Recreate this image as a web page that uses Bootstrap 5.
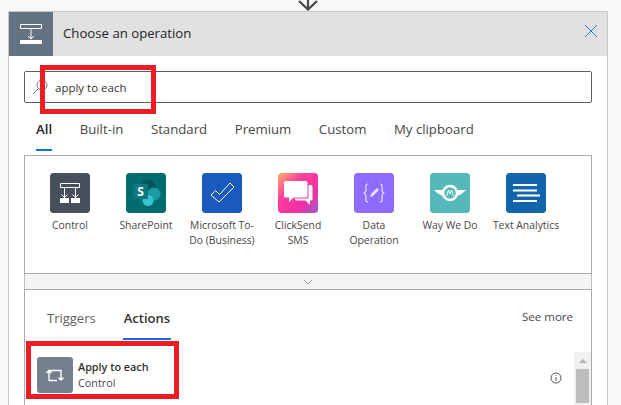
<!DOCTYPE html>
<html lang="en"><head><meta charset="utf-8"><title>Choose an operation</title>
<link rel="stylesheet" href="https://cdn.jsdelivr.net/npm/bootstrap@5.3.0/dist/css/bootstrap.min.css">
<style>
html,body{height:405px;overflow:hidden}
body{background:#f8f8f8;font-family:"Open Sans","Noto Sans",sans-serif;color:#323130;font-size:12px}
.page-wrap{padding:0 13px 0 8px;position:relative}
.flow-arrow{height:11px;line-height:0}
.op-card{background:#fff;border:1px solid #c8c8c8;border-bottom:0;height:394px;overflow:hidden}
.op-head{height:44px;background:#e1e1e1}
.op-badge{width:44px;height:44px;background:#647382}
.op-title{font-size:13.2px;margin-left:10px;color:#252423}
.op-close{margin-right:9px;margin-top:-6px}
.op-body{padding:15px 15px 0 15px}
.op-search{height:32px;border:1px solid #605e5c;border-radius:2px;padding-left:7px;gap:7px}
.op-search span{font-size:11.5px;color:#323130;padding-top:1px}
.tab-row{height:52px;gap:27.6px;padding-left:12px}
.tab-row a{height:48px;font-size:13.2px;color:#484644;text-decoration:none;display:flex;align-items:center;padding-top:8px;border-bottom:2px solid transparent}
.tab-row a.on{color:#252423;font-weight:600;border-bottom-color:#0f6cf0}
.conn-panel{height:118px;border:1px solid #a9a9a9;border-bottom:0;padding:17px 0 0 7px}
.conn-item{width:76px;padding:0 4px;text-align:center;font-size:10.4px;line-height:15px;color:#484644}
.conn-icon{width:40px;height:40px;border-radius:3px;margin:0 auto 5px;display:block}
.fold-bar{height:17px;background:#f3f3f3;border:1px solid #a9a9a9;border-left-color:#bbb;border-right-color:#bbb}
.res-panel{border:1px solid #a9a9a9;border-top:0;height:200px;position:relative}
.res-tabs{height:50px;padding-left:22px;gap:27px}
.res-tabs a{height:50px;font-size:13px;text-decoration:none;color:#605e5c;display:flex;align-items:center;padding-top:10px;border-bottom:2px solid transparent}
.res-tabs a.on{color:#323130;font-weight:600;border-bottom-color:#0f6cf0;padding:10px 1px 0}
.res-tabs a.see-link{margin-left:auto;margin-right:18px;font-size:11.5px;color:#484644;padding-top:6px}
.res-row{padding:17px 0 0 12px;gap:5px}
.res-icon{width:36px;height:36px;border-radius:3px;background:#75808f}
.res-name{font-size:10.8px;font-weight:600;line-height:16px;color:#323130;margin-top:2px}
.res-sub{font-size:10.8px;line-height:16px;color:#484644}
.res-info{margin-left:auto;margin-right:29px;margin-top:15px}
.scroll-rail{position:absolute;right:0;top:62px;width:17px;height:60px;background:#f1f1f1}
.scroll-up{width:0;height:0;border:4px solid transparent;border-top:0;border-bottom:4px solid #b0b0b0;margin:0 auto;position:relative;top:7px}
.scroll-thumb{width:13px;height:34px;background:#bdbdbd;margin:13px auto 0}
.red-mark{position:absolute;border:5px solid #ed1c24;pointer-events:none}
.mark-a{left:40px;top:65px;width:116px;height:49px}
.mark-b{left:26px;top:341px;width:153px;height:58px}
</style></head><body>
<div class="page-wrap">
<div class="flow-arrow d-flex justify-content-center">
<svg width="24" height="11" viewBox="0 0 24 11"><path d="M12 -6V9M3 1l9 8.500 9-8.500" fill="none" stroke="#484644" stroke-width="2.200"/></svg>
</div>
<div class="op-card">
 <div class="op-head d-flex align-items-center">
  <div class="op-badge d-flex align-items-center justify-content-center">
   <svg width="24" height="22" viewBox="0 0 24 22"><path d="M1.500 1.500h21v4h-21z" fill="none" stroke="#fff"/><path d="M12 6v10M9 13l3 3 3-3" fill="none" stroke="#fff"/><path d="M1 17h22v4H1z" fill="#fff"/></svg>
  </div>
  <div class="op-title flex-grow-1">Choose an operation</div>
  <svg class="op-close" width="14" height="14" viewBox="0 0 14 14"><path d="M1 1l12 12M13 1L1 13" stroke="#3f6fe8" fill="none"/></svg>
 </div>
 <div class="op-body">
  <div class="op-search d-flex align-items-center">
   <svg width="16" height="16" viewBox="0 0 16 16"><circle cx="10" cy="6" r="5" fill="none" stroke="#777"/><path d="M6.500 9.500L1 15" stroke="#777" fill="none"/></svg>
   <span>apply to each</span>
  </div>
  <nav class="tab-row d-flex">
   <a class="on" href="#">All</a><a href="#">Built-in</a><a href="#">Standard</a><a href="#">Premium</a><a href="#">Custom</a><a href="#">My clipboard</a>
  </nav>
  <div class="conn-panel d-flex">
   <div class="conn-item">
    <svg class="conn-icon" viewBox="0 0 40 40"><rect width="40" height="40" rx="3" fill="#484f5c"/><path d="M10.500 10.500h19v4h-19zM14.500 15v10M11.500 21.500l3 3 3-3M25.500 15v10M22.500 21.500l3 3 3-3" fill="none" stroke="#fff"/><path d="M10 25h9v5h-9zM21 25h9v5h-9z" fill="#fff"/></svg>
    Control</div>
   <div class="conn-item">
    <svg class="conn-icon" viewBox="0 0 40 40"><rect width="40" height="40" rx="3" fill="#036c70"/><circle cx="21.500" cy="15" r="8.500" fill="#04585c"/><circle cx="28" cy="21" r="6.500" fill="#1a9ba1"/><circle cx="22" cy="27.500" r="5.500" fill="#37c6d0"/><rect x="7" y="11" width="15" height="15" rx="1" fill="#0b7a80"/><text x="14.500" y="23" font-size="12" font-weight="700" text-anchor="middle" fill="#fff" font-family="Open Sans">S</text></svg>
    SharePoint</div>
   <div class="conn-item">
    <svg class="conn-icon" viewBox="0 0 40 40"><rect width="40" height="40" rx="3" fill="#185abd"/><path d="M9 22l4.500-4.500 4 4L28 10l4 4-15 15z" fill="none" stroke="#fff" stroke-width="1"/></svg>
    Microsoft To-Do (Business)</div>
   <div class="conn-item">
    <svg class="conn-icon" viewBox="0 0 40 40"><defs><linearGradient id="cs" x1="0" y1="0" x2="1" y2="1"><stop offset="0" stop-color="#ffb06a"/><stop offset=".35" stop-color="#ff3d9a"/><stop offset=".7" stop-color="#f22fa6"/><stop offset="1" stop-color="#9a5fd0"/></linearGradient></defs><rect width="40" height="40" rx="3" fill="url(#cs)"/><path d="M30.500 12H33a1.500 1.500 0 0 1 1.500 1.500V26a1.500 1.500 0 0 1-1.500 1.500h-1V32l-4.500-4.500H18l-2-2h13a1.500 1.500 0 0 0 1.500-1.500z" fill="#fff"/><path d="M7.500 8H28a1.500 1.500 0 0 1 1.500 1.500V23a1.500 1.500 0 0 1-1.500 1.500H15.500L11 29v-4.500H7.500A1.500 1.500 0 0 1 6 23V9.500A1.500 1.500 0 0 1 7.500 8z" fill="#fff"/></svg>
    ClickSend SMS</div>
   <div class="conn-item">
    <svg class="conn-icon" viewBox="0 0 40 40"><rect width="40" height="40" rx="3" fill="#8f6cff"/><path d="M14 11c-3 0-2 3-2 5 0 3-1 4-2.500 4 1.500 0 2.500 1 2.500 4 0 2-1 5 2 5M26 11c3 0 2 3 2 5 0 3 1 4 2.500 4-1.500 0-2.500 1-2.500 4 0 2 1 5-2 5" fill="none" stroke="#e8e0ff" stroke-width="1.200"/><path d="M16 24l1-3 6-6 2 2-6 6z" fill="#e8e0ff"/></svg>
    Data Operation</div>
   <div class="conn-item">
    <svg class="conn-icon" viewBox="0 0 40 40"><rect width="40" height="40" rx="3" fill="#55b9bc"/><path d="M4 17h12l-1 6c-4 0-8-3-11-6zM36 17H24l1 6c4 0 8-3 11-6z" fill="#fff"/><circle cx="20" cy="20" r="7" fill="#55b9bc" stroke="#fff" stroke-width="2.500"/><path d="M16.500 23l2-6 1.500 4 1.500-4 2 6" fill="none" stroke="#fff"/></svg>
    Way We Do</div>
   <div class="conn-item">
    <svg class="conn-icon" viewBox="0 0 40 40"><rect width="40" height="40" rx="3" fill="#1265ad"/><path d="M7 12h24M7 17.500h24M11 22.500h23M7 28h24" stroke="#fff" stroke-width="1.800" fill="none"/></svg>
    Text Analytics</div>
  </div>
  <div class="fold-bar d-flex align-items-center justify-content-center">
   <svg width="10" height="6" viewBox="0 0 10 6"><path d="M1 1l4 4 4-4" fill="none" stroke="#9aa0a6"/></svg>
  </div>
  <div class="res-panel">
   <div class="res-tabs d-flex">
    <a href="#">Triggers</a><a class="on" href="#">Actions</a>
    <a class="see-link" href="#">See more</a>
   </div>
   <div class="res-row d-flex">
    <div class="res-icon d-flex align-items-center justify-content-center">
     <svg width="18" height="14" viewBox="0 0 18 14"><path d="M3 13V2.500h12V12M.500 5L3 2.500 5.500 5M12.500 9.500L15 12l2.500-2.500M3 12.500h8" fill="none" stroke="#fff" stroke-width="1.400"/></svg>
    </div>
    <div><div class="res-name">Apply to each</div><div class="res-sub">Control</div></div>
    <svg class="res-info" width="12" height="12" viewBox="0 0 12 12"><circle cx="6" cy="6" r="5" fill="none" stroke="#555"/><path d="M6 3v1M6 5v4" stroke="#555"/></svg>
   </div>
   <div class="scroll-rail"><div class="scroll-up"></div><div class="scroll-thumb"></div></div>
  </div>
 </div>
</div>
<div class="red-mark mark-a"></div>
<div class="red-mark mark-b"></div>
</div>
</body></html>
